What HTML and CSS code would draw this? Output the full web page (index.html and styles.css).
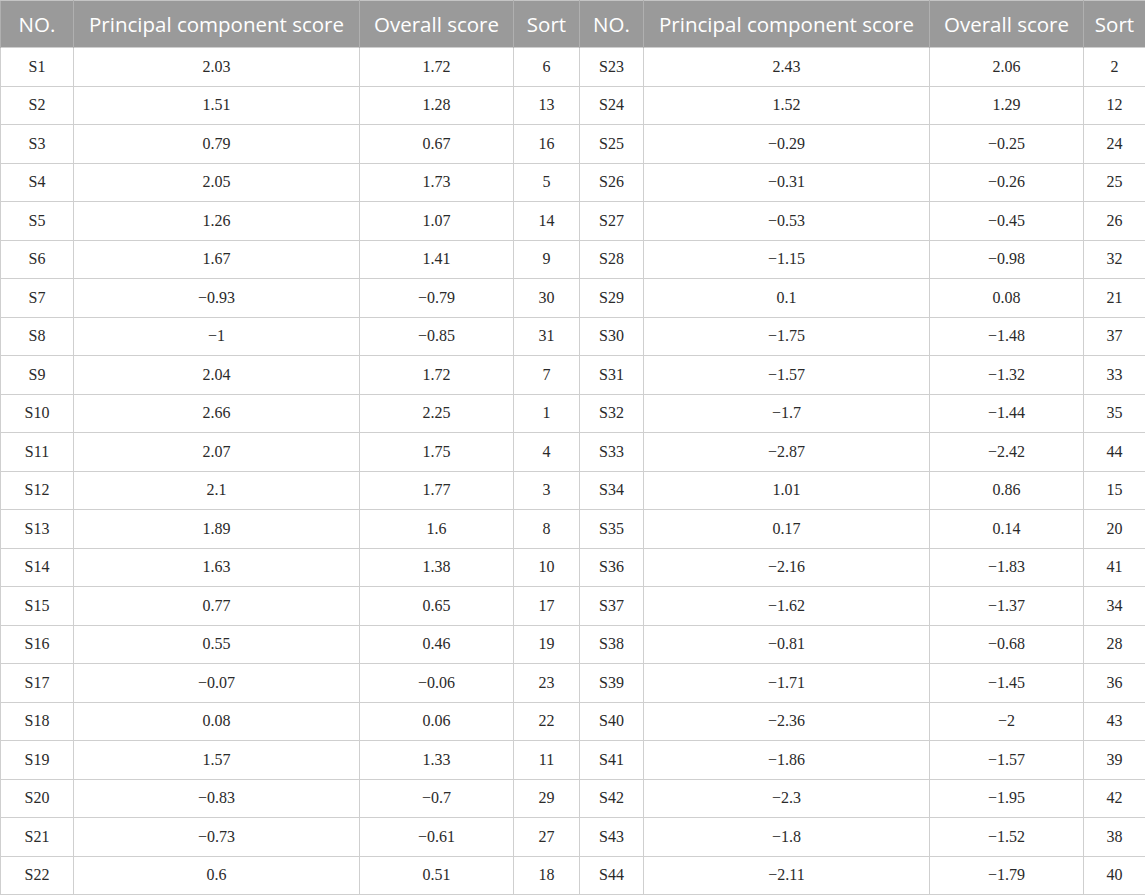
FILE: index.html
```html
<!DOCTYPE html>
<html>
<head>
<meta charset="utf-8">
<link rel="stylesheet" href="styles.css">
</head>
<body>
<table class="scores">
<colgroup>
<col class="c-no"><col class="c-pc"><col class="c-ov"><col class="c-so">
<col class="c-no2"><col class="c-pc"><col class="c-ov"><col class="c-so2">
</colgroup>
<thead>
<tr><th>NO.</th><th>Principal component score</th><th>Overall score</th><th>Sort</th><th>NO.</th><th>Principal component score</th><th>Overall score</th><th>Sort</th></tr>
</thead>
<tbody>
<tr><td>S1</td><td>2.03</td><td>1.72</td><td>6</td><td>S23</td><td>2.43</td><td>2.06</td><td>2</td></tr>
<tr><td>S2</td><td>1.51</td><td>1.28</td><td>13</td><td>S24</td><td>1.52</td><td>1.29</td><td>12</td></tr>
<tr><td>S3</td><td>0.79</td><td>0.67</td><td>16</td><td>S25</td><td>−0.29</td><td>−0.25</td><td>24</td></tr>
<tr><td>S4</td><td>2.05</td><td>1.73</td><td>5</td><td>S26</td><td>−0.31</td><td>−0.26</td><td>25</td></tr>
<tr><td>S5</td><td>1.26</td><td>1.07</td><td>14</td><td>S27</td><td>−0.53</td><td>−0.45</td><td>26</td></tr>
<tr><td>S6</td><td>1.67</td><td>1.41</td><td>9</td><td>S28</td><td>−1.15</td><td>−0.98</td><td>32</td></tr>
<tr><td>S7</td><td>−0.93</td><td>−0.79</td><td>30</td><td>S29</td><td>0.1</td><td>0.08</td><td>21</td></tr>
<tr><td>S8</td><td>−1</td><td>−0.85</td><td>31</td><td>S30</td><td>−1.75</td><td>−1.48</td><td>37</td></tr>
<tr><td>S9</td><td>2.04</td><td>1.72</td><td>7</td><td>S31</td><td>−1.57</td><td>−1.32</td><td>33</td></tr>
<tr><td>S10</td><td>2.66</td><td>2.25</td><td>1</td><td>S32</td><td>−1.7</td><td>−1.44</td><td>35</td></tr>
<tr><td>S11</td><td>2.07</td><td>1.75</td><td>4</td><td>S33</td><td>−2.87</td><td>−2.42</td><td>44</td></tr>
<tr><td>S12</td><td>2.1</td><td>1.77</td><td>3</td><td>S34</td><td>1.01</td><td>0.86</td><td>15</td></tr>
<tr><td>S13</td><td>1.89</td><td>1.6</td><td>8</td><td>S35</td><td>0.17</td><td>0.14</td><td>20</td></tr>
<tr><td>S14</td><td>1.63</td><td>1.38</td><td>10</td><td>S36</td><td>−2.16</td><td>−1.83</td><td>41</td></tr>
<tr><td>S15</td><td>0.77</td><td>0.65</td><td>17</td><td>S37</td><td>−1.62</td><td>−1.37</td><td>34</td></tr>
<tr><td>S16</td><td>0.55</td><td>0.46</td><td>19</td><td>S38</td><td>−0.81</td><td>−0.68</td><td>28</td></tr>
<tr><td>S17</td><td>−0.07</td><td>−0.06</td><td>23</td><td>S39</td><td>−1.71</td><td>−1.45</td><td>36</td></tr>
<tr><td>S18</td><td>0.08</td><td>0.06</td><td>22</td><td>S40</td><td>−2.36</td><td>−2</td><td>43</td></tr>
<tr><td>S19</td><td>1.57</td><td>1.33</td><td>11</td><td>S41</td><td>−1.86</td><td>−1.57</td><td>39</td></tr>
<tr><td>S20</td><td>−0.83</td><td>−0.7</td><td>29</td><td>S42</td><td>−2.3</td><td>−1.95</td><td>42</td></tr>
<tr><td>S21</td><td>−0.73</td><td>−0.61</td><td>27</td><td>S43</td><td>−1.8</td><td>−1.52</td><td>38</td></tr>
<tr><td>S22</td><td>0.6</td><td>0.51</td><td>18</td><td>S44</td><td>−2.11</td><td>−1.79</td><td>40</td></tr>
</tbody>
</table>
</body>
</html>
```
FILE: styles.css
```css
html, body {
  margin: 0;
  padding: 0;
  background: #ffffff;
}
.scores {
  width: 1145px;
  border-collapse: collapse;
  table-layout: fixed;
}
.c-no { width: 73px; }
.c-pc { width: 286px; }
.c-ov { width: 154px; }
.c-so { width: 66px; }
.c-no2 { width: 64px; }
.c-so2 { width: 62px; }
.scores th {
  height: 46px;
  padding: 0;
  background: #9a9a9a;
  color: #ffffff;
  font-family: "Open Sans", "Noto Sans", sans-serif;
  font-weight: 400;
  font-size: 20.5px;
  text-align: center;
  white-space: nowrap;
  border-left: 1px solid #b0b0b0;
  border-right: 1px solid #b0b0b0;
  border-top: 1px solid #c4c4c4;
}
.scores td {
  height: 37.5px;
  padding: 0;
  text-align: center;
  font-family: "Liberation Serif", "Times New Roman", serif;
  font-size: 16px;
  color: #2a2a2a;
  border: 1px solid #cfcfcf;
}
```
